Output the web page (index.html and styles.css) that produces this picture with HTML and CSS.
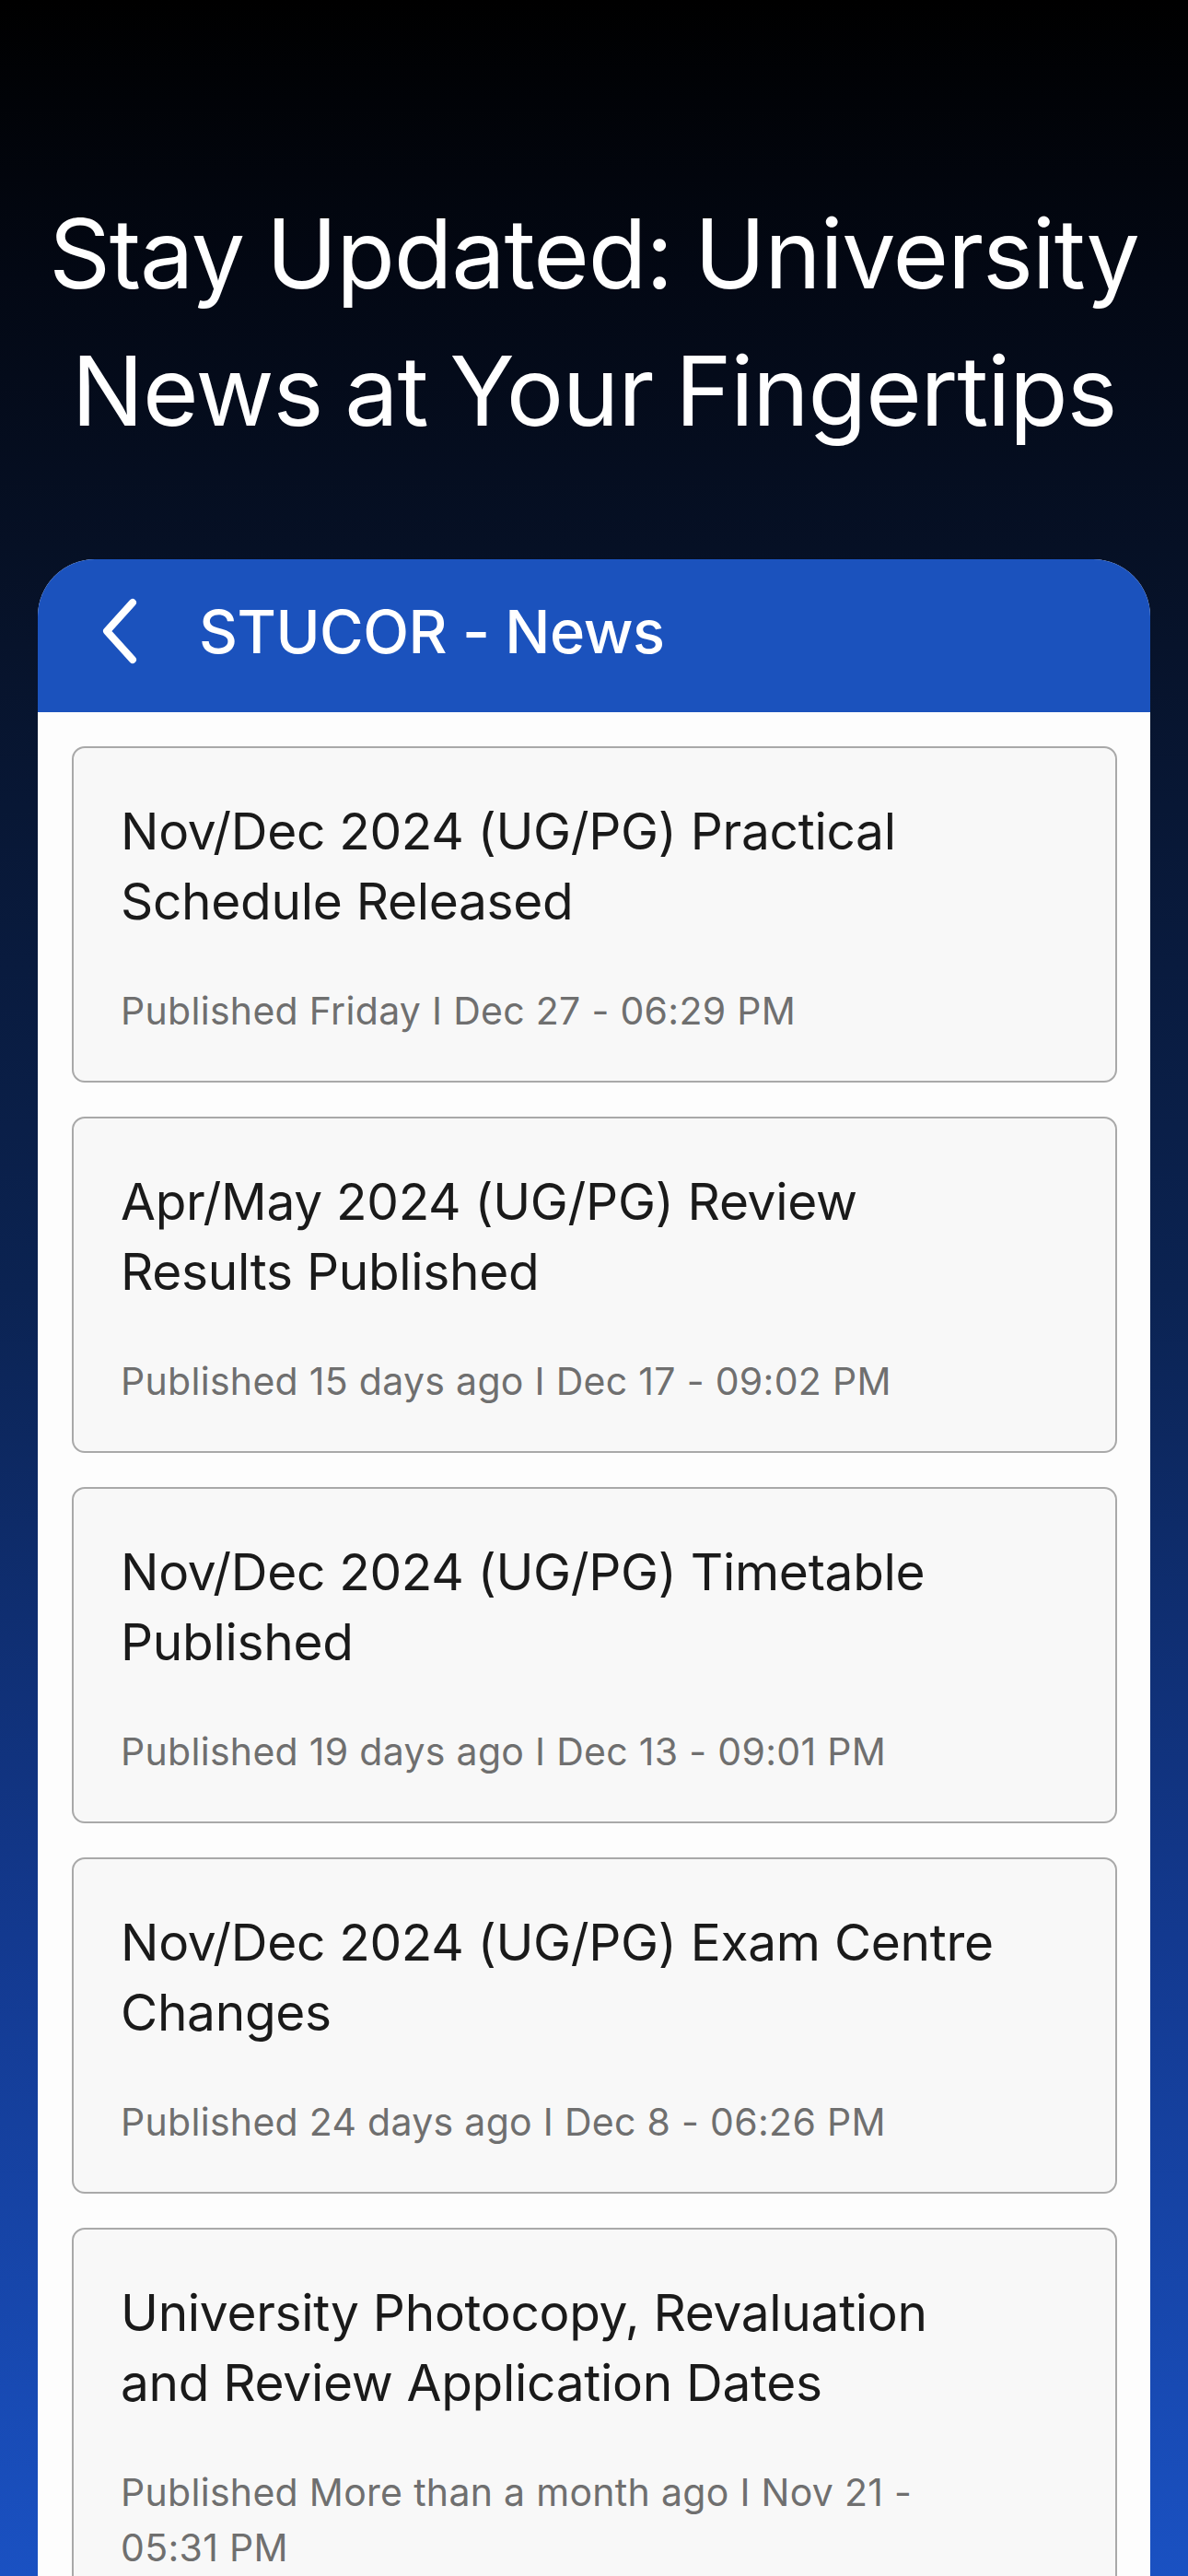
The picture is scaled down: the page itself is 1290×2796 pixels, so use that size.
FILE: index.html
```html
<!DOCTYPE html>
<html lang="en">
<head>
<meta charset="utf-8">
<title>STUCOR - News</title>
<link rel="stylesheet" href="styles.css">
</head>
<body>
<main class="page">
  <h1 class="headline">Stay Updated: University News at Your Fingertips</h1>
  <section class="phone">
    <header class="appbar">
      <svg class="back" width="44" height="72" viewBox="0 0 44 72" aria-hidden="true">
        <path d="M36 5 L8 36 L36 67" fill="none" stroke="#ffffff" stroke-width="8" stroke-linecap="round" stroke-linejoin="round"/>
      </svg>
      <span class="appbar-title">STUCOR - News</span>
    </header>
    <div class="list">
      <article class="card">
        <h2 class="card-title">Nov/Dec 2024 (UG/PG) Practical Schedule Released</h2>
        <p class="card-meta">Published Friday I Dec 27 - 06:29 PM</p>
      </article>
      <article class="card">
        <h2 class="card-title">Apr/May 2024 (UG/PG) Review Results Published</h2>
        <p class="card-meta">Published 15 days ago I Dec 17 - 09:02 PM</p>
      </article>
      <article class="card">
        <h2 class="card-title">Nov/Dec 2024 (UG/PG) Timetable Published</h2>
        <p class="card-meta">Published 19 days ago I Dec 13 - 09:01 PM</p>
      </article>
      <article class="card">
        <h2 class="card-title">Nov/Dec 2024 (UG/PG) Exam Centre Changes</h2>
        <p class="card-meta">Published 24 days ago I Dec 8 - 06:26 PM</p>
      </article>
      <article class="card">
        <h2 class="card-title">University Photocopy, Revaluation and Review Application Dates</h2>
        <p class="card-meta">Published More than a month ago I Nov 21 - 05:31 PM</p>
      </article>
    </div>
  </section>
</main>
</body>
</html>
```
FILE: styles.css
```css
html, body {
  margin: 0;
  padding: 0;
}
body {
  width: 1290px;
  height: 2796px;
  overflow: hidden;
  font-family: Inter, "Noto Sans", "Liberation Sans", sans-serif;
  background: linear-gradient(180deg, #000000 0px, #030814 300px, #07132b 700px, #0b2352 1400px, #13398f 2100px, #1a51c2 2796px);
}
.page {
  display: flex;
  flex-direction: column;
  align-items: center;
  height: 2796px;
}
.headline {
  margin: 0;
  padding-top: 201px;
  width: 1220px;
  text-align: center;
  color: #ffffff;
  font-size: 104px;
  font-weight: 400;
  line-height: 149px;
  letter-spacing: -1.2px;
  word-spacing: -4px;
}
.phone {
  margin-top: 108px;
  width: 1208px;
  flex: 1;
  background: #fdfdfd;
  border-radius: 62px 62px 0 0;
  overflow: hidden;
}
.appbar {
  height: 166px;
  box-sizing: border-box;
  padding: 0 0 10px 67px;
  background: #1b52bd;
  display: flex;
  align-items: center;
  gap: 64px;
}
.back {
  display: block;
  flex: none;
}
.appbar-title {
  color: #ffffff;
  font-size: 65px;
  font-weight: 500;
  letter-spacing: -0.5px;
}
.list {
  padding: 37px 36px 0 37px;
  display: flex;
  flex-direction: column;
  gap: 37px;
}
.card {
  background: #f8f8f8;
  border: 2.5px solid #a9a9a9;
  border-radius: 14px;
  padding: 52px 122px 46px 51px;
}
.card-title {
  margin: 0;
  color: #1a1a1a;
  font-size: 55px;
  font-weight: 400;
  line-height: 76px;
  letter-spacing: -0.3px;
}
.card-meta {
  margin: 51px 0 0;
  color: #6f6f6f;
  font-size: 41px;
  font-weight: 400;
  line-height: 60px;
  letter-spacing: 0.3px;
}
```
